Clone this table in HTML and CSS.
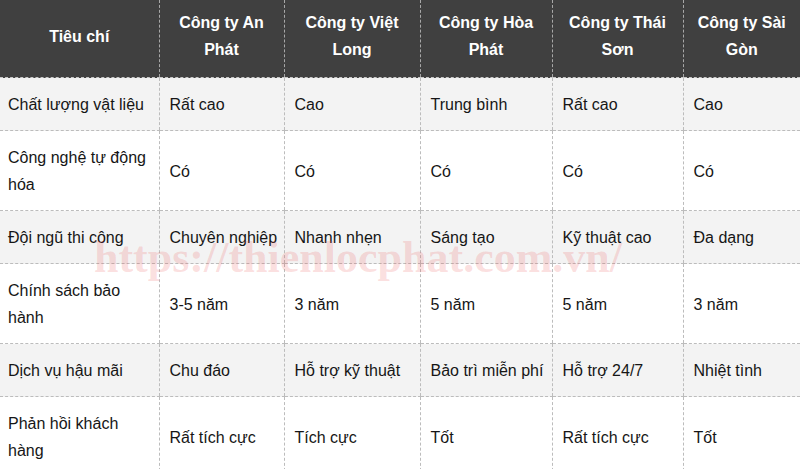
FILE: index.html
```html
<!DOCTYPE html>
<html lang="vi">
<head>
<meta charset="utf-8">
<link rel="stylesheet" href="styles.css">
</head>
<body>
<div class="wrap">
<table class="cmp">
  <colgroup>
    <col class="c1"><col class="c2"><col class="c3"><col class="c4"><col class="c5"><col class="c6">
  </colgroup>
  <thead>
    <tr>
      <th>Tiêu chí</th>
      <th>Công ty An Phát</th>
      <th>Công ty Việt Long</th>
      <th>Công ty Hòa Phát</th>
      <th>Công ty Thái Sơn</th>
      <th>Công ty Sài Gòn</th>
    </tr>
  </thead>
  <tbody>
    <tr class="alt">
      <td>Chất lượng vật liệu</td><td>Rất cao</td><td>Cao</td><td>Trung bình</td><td>Rất cao</td><td>Cao</td>
    </tr>
    <tr>
      <td>Công nghệ tự động hóa</td><td>Có</td><td>Có</td><td>Có</td><td>Có</td><td>Có</td>
    </tr>
    <tr class="alt">
      <td>Đội ngũ thi công</td><td>Chuyên nghiệp</td><td>Nhanh nhẹn</td><td>Sáng tạo</td><td>Kỹ thuật cao</td><td>Đa dạng</td>
    </tr>
    <tr>
      <td>Chính sách bảo hành</td><td>3-5 năm</td><td>3 năm</td><td>5 năm</td><td>5 năm</td><td>3 năm</td>
    </tr>
    <tr class="alt">
      <td>Dịch vụ hậu mãi</td><td>Chu đáo</td><td>Hỗ trợ kỹ thuật</td><td>Bảo trì miễn phí</td><td>Hỗ trợ 24/7</td><td>Nhiệt tình</td>
    </tr>
    <tr>
      <td>Phản hồi khách hàng</td><td>Rất tích cực</td><td>Tích cực</td><td>Tốt</td><td>Rất tích cực</td><td>Tốt</td>
    </tr>
  </tbody>
</table>
<div class="watermark">https://thienlocphat.com.vn/</div>
</div>
</body>
</html>
```

FILE: styles.css
```css
html, body {
  margin: 0;
  padding: 0;
  background: #ffffff;
}
.wrap {
  position: relative;
  width: 800px;
  height: 469px;
  overflow: hidden;
}
.cmp {
  width: 800px;
  table-layout: fixed;
  border-collapse: collapse;
  font-family: "Liberation Sans", Arial, sans-serif;
  font-size: 16px;
  line-height: 27px;
  color: #161616;
}
.c1 { width: 159px; }
.c2 { width: 125px; }
.c3 { width: 136px; }
.c4 { width: 132px; }
.c5 { width: 131px; }
.c6 { width: 117px; }

.cmp th {
  background: #404040;
  color: #ffffff;
  font-weight: bold;
  text-align: center;
  vertical-align: middle;
  padding: 9px 6px 14px;
  border-left: 1px dashed #a8a8a8;
  border-bottom: 1px dashed #c8c8c8;
}
.cmp td {
  text-align: left;
  vertical-align: middle;
  padding: 13px 5px 12px 10px;
  border-left: 1px dashed #bcbcbc;
  border-bottom: 1px dashed #bcbcbc;
}
.cmp th:first-child,
.cmp td:first-child {
  border-left: none;
}
.cmp td:first-child {
  padding-left: 8px;
  padding-right: 8px;
}
.cmp tr.alt td {
  background: #f3f3f3;
}
.watermark {
  position: absolute;
  left: 94px;
  top: 236px;
  font-family: "Liberation Serif", "Times New Roman", serif;
  font-weight: bold;
  font-size: 44px;
  line-height: 1;
  color: rgba(235, 90, 90, 0.2);
  white-space: nowrap;
  pointer-events: none;
}
```
